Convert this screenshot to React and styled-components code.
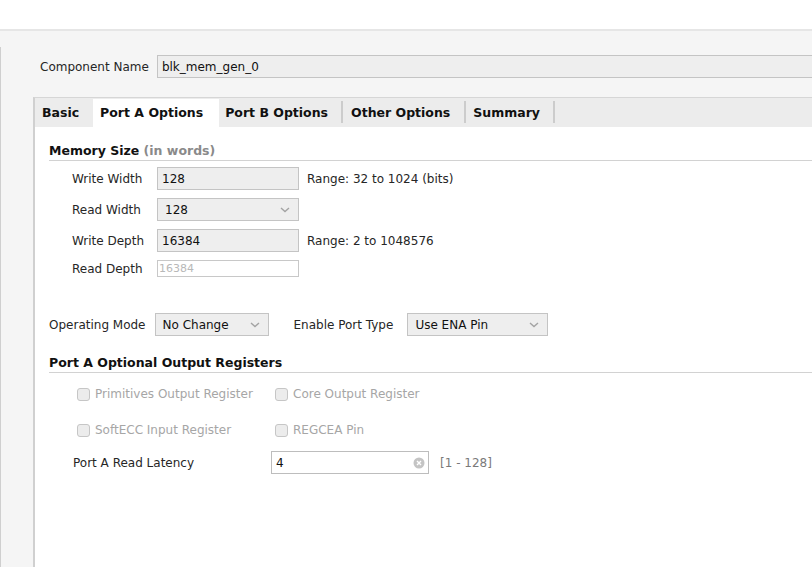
import React from "react";
import styled, { createGlobalStyle } from "styled-components";

const Global = createGlobalStyle`
  html, body {
    margin: 0;
    padding: 0;
    background: #ffffff;
  }
  body {
    font-family: "DejaVu Sans", "Liberation Sans", sans-serif;
    font-size: 12px;
    color: #222;
  }
  * { box-sizing: border-box; }
`;

const Page = styled.div`
  width: 812px;
  height: 567px;
  overflow: hidden;
  display: flex;
  flex-direction: column;
`;

const TopStrip = styled.div`
  height: 31px;
  flex: none;
  background: #fff;
  border-bottom: 2px solid #e6e6e6;
`;

const Main = styled.div`
  flex: 1;
  background: #f5f5f5;
  padding-top: 16px;
  display: flex;
  flex-direction: column;
`;

const Panel = styled.div`
  flex: 1;
  border-left: 1px solid #cfcfcf;
  display: flex;
  flex-direction: column;
  padding-top: 8px;
`;

const NameRow = styled.div`
  display: flex;
  align-items: center;
  padding-left: 39px;
  gap: 8px;
`;

const Label = styled.span`
  color: ${(p) => (p.$muted ? "#a8a8a8" : "#262626")};
  white-space: nowrap;
`;

const TextBox = styled.div`
  height: ${(p) => p.$h || 23}px;
  width: ${(p) => (p.$w ? `${p.$w}px` : "auto")};
  flex: ${(p) => (p.$grow ? 1 : "none")};
  margin-right: ${(p) => (p.$grow ? "-20px" : "0")};
  background: ${(p) => p.$bg || "#eeeeee"};
  border: 1px solid ${(p) => p.$border || "#c4c4c4"};
  display: flex;
  align-items: center;
  padding: 0 ${(p) => p.$pl || 4}px;
  color: ${(p) => p.$color || "#111"};
  font-size: ${(p) => p.$fs || 12}px;
  white-space: nowrap;
  position: relative;
`;

const Select = styled.div`
  height: 23px;
  width: ${(p) => p.$w}px;
  background: #eeeeee;
  border: 1px solid #c4c4c4;
  display: flex;
  align-items: center;
  justify-content: space-between;
  padding: 0 8px 0 7px;
  color: #111;
  flex: none;
`;

const TabBox = styled.div`
  flex: 1;
  margin: 19px 0 0 32px;
  border-top: 1px solid #d6d6d6;
  border-left: 2px solid #d0d0d0;
  display: flex;
  flex-direction: column;
  background: #fff;
`;

const TabBar = styled.div`
  height: 29px;
  background: #ececec;
  display: flex;
  padding-top: 1px;
`;

const Tab = styled.div`
  position: relative;
  display: flex;
  align-items: center;
  padding: 0 ${(p) => p.$pr || 15}px 2px ${(p) => p.$pl || 7}px;
  font-weight: bold;
  font-size: 12.5px;
  color: #111;
  background: ${(p) => (p.$active ? "#fff" : "transparent")};
  &::after {
    content: "";
    display: ${(p) => (p.$sep ? "block" : "none")};
    position: absolute;
    right: 0;
    top: 2px;
    bottom: 4px;
    width: 2px;
    background: #cccccc;
  }
`;

const Content = styled.div`
  flex: 1;
  padding: 16px 0 0 14px;
  display: flex;
  flex-direction: column;
`;

const Heading = styled.div`
  font-weight: bold;
  font-size: 12.5px;
  color: #111;
  padding-bottom: 2px;
  border-bottom: 1px solid #d2d2d2;
  span { color: #8a8a8a; }
`;

const FieldGrid = styled.div`
  display: grid;
  grid-template-columns: 77px 142px auto;
  align-items: center;
  row-gap: 8px;
  column-gap: 8px;
  padding: 6px 0 0 23px;
`;

const ModeRow = styled.div`
  display: flex;
  align-items: center;
  margin-top: 36px;
  margin-bottom: 19px;
`;

const ModeLabel = styled(Label)`
  margin-right: ${(p) => p.$gap || 9}px;
`;

const Spacer = styled.div`
  width: ${(p) => p.$w}px;
  flex: none;
`;

const CheckGrid = styled.div`
  display: grid;
  grid-template-columns: 198px auto;
  row-gap: 22px;
  padding: 14px 0 0 28px;
`;

const CheckItem = styled.label`
  display: flex;
  align-items: center;
  gap: 5px;
  color: #a6a6a6;
`;

const Box = styled.span`
  width: 13px;
  height: 13px;
  border: 1px solid #c6c6c6;
  border-radius: 3px;
  background: #ececec;
  flex: none;
`;

const LatencyRow = styled.div`
  display: flex;
  align-items: center;
  padding: 14px 0 0 24px;
`;

const Range = styled.span`
  color: #7a7a7a;
  margin-left: 11px;
`;

const Chevron = () => (
  <svg width="10" height="6" viewBox="0 0 10 6">
    <path d="M1 1 L5 4.5 L9 1" fill="none" stroke="#a3a3a3" strokeWidth="1.4" />
  </svg>
);

const ClearIcon = styled.svg`
  position: absolute;
  right: 3px;
  top: 5px;
`;

export default function App() {
  return (
    <Page>
      <Global />
      <TopStrip />
      <Main>
        <Panel>
          <NameRow>
            <Label>Component Name</Label>
            <TextBox $grow $h={23}>blk_mem_gen_0</TextBox>
          </NameRow>
          <TabBox>
            <TabBar>
              <Tab $pl={7} $pr={14}>Basic</Tab>
              <Tab $active $pr={16}>Port A Options</Tab>
              <Tab $pl={6} $sep>Port B Options</Tab>
              <Tab $pl={8} $pr={16} $sep>Other Options</Tab>
              <Tab $pl={7} $sep>Summary</Tab>
            </TabBar>
            <Content>
              <Heading>
                Memory Size <span>(in words)</span>
              </Heading>
              <FieldGrid>
                <Label>Write Width</Label>
                <TextBox>128</TextBox>
                <Label>Range: 32 to 1024 (bits)</Label>

                <Label>Read Width</Label>
                <Select $w={142}>
                  <span>128</span>
                  <Chevron />
                </Select>
                <span />

                <Label>Write Depth</Label>
                <TextBox>16384</TextBox>
                <Label>Range: 2 to 1048576</Label>

                <Label>Read Depth</Label>
                <TextBox $h={17} $bg="#fff" $border="#c8c8c8" $color="#b8b8b8" $fs={11} $pl={1}>
                  16384
                </TextBox>
                <span />
              </FieldGrid>

              <ModeRow>
                <ModeLabel>Operating Mode</ModeLabel>
                <Select $w={114}>
                  <span>No Change</span>
                  <Chevron />
                </Select>
                <Spacer $w={25} />
                <ModeLabel $gap={14}>Enable Port Type</ModeLabel>
                <Select $w={141}>
                  <span>Use ENA Pin</span>
                  <Chevron />
                </Select>
              </ModeRow>

              <Heading>Port A Optional Output Registers</Heading>
              <CheckGrid>
                <CheckItem><Box />Primitives Output Register</CheckItem>
                <CheckItem><Box />Core Output Register</CheckItem>
                <CheckItem><Box />SoftECC Input Register</CheckItem>
                <CheckItem><Box />REGCEA Pin</CheckItem>
              </CheckGrid>

              <LatencyRow>
                <Label>Port A Read Latency</Label>
                <Spacer $w={77} />
                <TextBox $w={158} $bg="#fff" $border="#bdbdbd">
                  4
                  <ClearIcon width="12" height="12" viewBox="0 0 12 12">
                    <circle cx="6" cy="6" r="5.5" fill="#c4c4c4" />
                    <path d="M4 4 L8 8 M8 4 L4 8" stroke="#fff" strokeWidth="1.4" />
                  </ClearIcon>
                </TextBox>
                <Range>[1 - 128]</Range>
              </LatencyRow>
            </Content>
          </TabBox>
        </Panel>
      </Main>
    </Page>
  );
}
